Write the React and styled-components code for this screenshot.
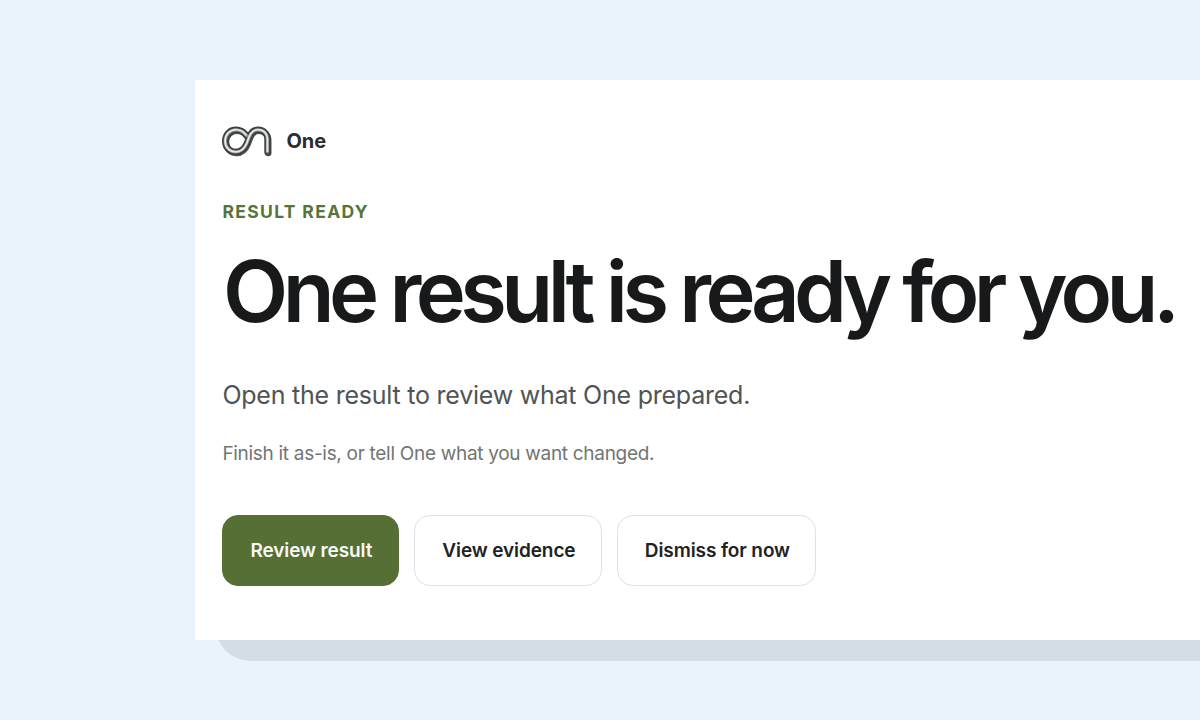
import React from "react";
import styled, { createGlobalStyle } from "styled-components";

const GlobalStyle = createGlobalStyle`
  * { box-sizing: border-box; }
  body {
    margin: 0;
    background: #e8f4fa;
    font-family: Inter, "Liberation Sans", sans-serif;
    overflow: hidden;
  }
`;

const Stage = styled.main`
  position: relative;
  height: 720px;
  padding: 80px 0 0 195px;
  overflow: hidden;
`;

const Shadow = styled.div`
  position: absolute;
  left: 215px;
  right: -60px;
  top: 100px;
  height: 561px;
  border-radius: 36px;
  background: #d3dee4;
`;

const Card = styled.section`
  position: relative;
  display: flex;
  flex-direction: column;
  align-items: flex-start;
  height: 560px;
  padding: 46px 0 0 27.4px;
  background: #fff;
  white-space: nowrap;
`;

const Brand = styled.header`
  display: flex;
  align-items: center;
  gap: 14px;
  height: 31px;
`;

const BrandName = styled.span`
  font-size: 20px;
  line-height: 30px;
  font-weight: 700;
  color: #2b2d2f;
  padding-bottom: 1px;
`;

const Eyebrow = styled.p`
  margin: 43px 0 0;
  font-size: 17.5px;
  line-height: 24px;
  font-weight: 700;
  letter-spacing: 1.35px;
  color: #587538;
`;

const Title = styled.h1`
  margin: 17px 0 0;
  padding-left: 0.7px;
  font-size: 84.8px;
  line-height: 100px;
  font-weight: 600;
  letter-spacing: -5.55px;
  color: #17191a;
`;

const Lead = styled.p`
  margin: 38px 0 0;
  font-size: 25px;
  line-height: 32px;
  color: #505453;
  letter-spacing: -0.23px;
`;

const Note = styled.p`
  margin: 31px 0 0;
  font-size: 19px;
  line-height: 24px;
  color: #717573;
  letter-spacing: -0.3px;
`;

const Actions = styled.div`
  display: flex;
  gap: 15px;
  margin-top: 49px;
`;

const Button = styled.button`
  width: ${(p) => p.$width}px;
  height: 71px;
  padding: 0 0 0 1px;
  border: 1.5px solid ${(p) => (p.$primary ? "#566f35" : "#e0e1e1")};
  border-radius: 16px;
  background: ${(p) => (p.$primary ? "#566f35" : "#fff")};
  color: ${(p) => (p.$primary ? "#f7f8f5" : "#202224")};
  font: 600 19px/24px Inter, "Liberation Sans", sans-serif;
  letter-spacing: -0.1px;
`;

const loop =
  "M24.5 9.5 C21.5 5.5 18 3.8 14 3.8 C8 3.8 3.2 8.7 3.2 15 C3.2 21.5 8 26 13.8 26 C19.5 26 22.5 23 25 17 C27.5 9.5 29.5 3.8 36 3.8 C42 3.8 45.5 8 45.5 13.5 V26";

function Logo() {
  return (
    <svg width="50" height="31" viewBox="0 0 50 31" fill="none" aria-hidden="true">
      <path d={loop} transform="translate(0.8 1)" stroke="#505253" strokeWidth="6.4" strokeLinecap="round" />
      <path d={loop} stroke="#3c3e3f" strokeWidth="6.4" strokeLinecap="round" />
      <path d={loop} stroke="#8c8f8f" strokeWidth="3.2" strokeLinecap="round" />
      <path d={loop} transform="translate(-0.1 -0.1)" stroke="#e6e8e7" strokeWidth="1.8" />
    </svg>
  );
}

export default function App() {
  return (
    <>
      <GlobalStyle />
      <Stage>
        <Shadow />
        <Card>
          <Brand>
            <Logo />
            <BrandName>One</BrandName>
          </Brand>
          <Eyebrow>RESULT READY</Eyebrow>
          <Title>One result is ready for you.</Title>
          <Lead>Open the result to review what One prepared.</Lead>
          <Note>Finish it as-is, or tell One what you want changed.</Note>
          <Actions>
            <Button $primary $width={177}>Review result</Button>
            <Button $width={188}>View evidence</Button>
            <Button $width={199}>Dismiss for now</Button>
          </Actions>
        </Card>
      </Stage>
    </>
  );
}
